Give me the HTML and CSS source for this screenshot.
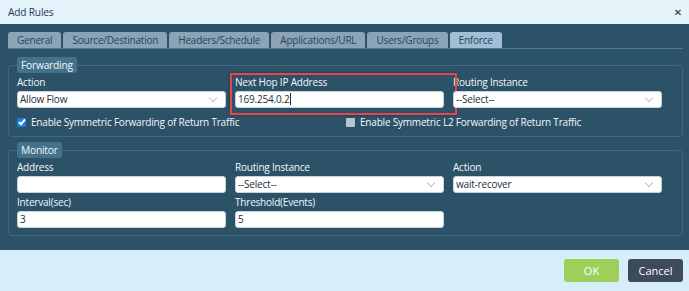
FILE: index.html
```html
<!DOCTYPE html>
<html lang="en">
<head>
    <meta charset="UTF-8">
    <title>Add Rules</title>
    <link rel="stylesheet" href="styles.css">
</head>
<body>
    <div class="dialog">
        <div class="titlebar">
            <span class="title">Add Rules</span>
            <span class="close">✕</span>
        </div>

        <div class="content">
            <!-- tabs -->
            <div class="tabs">
                <div class="tab">General</div>
                <div class="tab">Source/Destination</div>
                <div class="tab">Headers/Schedule</div>
                <div class="tab">Applications/URL</div>
                <div class="tab">Users/Groups</div>
                <div class="tab active">Enforce</div>
            </div>

            <!-- forwarding -->
            <fieldset class="group">
                <legend>Forwarding</legend>
                <div class="fields">
                    <div class="field">
                        <label>Action</label>
                        <div class="select">Allow Flow</div>
                    </div>
                    <div class="field highlight">
                        <label>Next Hop IP Address</label>
                        <div class="input">169.254.0.2<span class="caret"></span></div>
                    </div>
                    <div class="field">
                        <label>Routing Instance</label>
                        <div class="select">--Select--</div>
                    </div>
                </div>
                <div class="checks">
                    <div class="check"><span class="box checked"></span>Enable Symmetric Forwarding of Return Traffic</div>
                    <div class="check"><span class="box"></span>Enable Symmetric L2 Forwarding of Return Traffic</div>
                </div>
            </fieldset>

            <!-- monitor -->
            <fieldset class="group">
                <legend>Monitor</legend>
                <div class="fields">
                    <div class="field">
                        <label>Address</label>
                        <div class="input"></div>
                    </div>
                    <div class="field">
                        <label>Routing Instance</label>
                        <div class="select">--Select--</div>
                    </div>
                    <div class="field">
                        <label>Action</label>
                        <div class="select">wait-recover</div>
                    </div>
                    <div class="field">
                        <label>Interval(sec)</label>
                        <div class="input">3</div>
                    </div>
                    <div class="field">
                        <label>Threshold(Events)</label>
                        <div class="input">5</div>
                    </div>
                </div>
            </fieldset>
        </div>

        <div class="footer">
            <button class="btn btn-ok">OK</button>
            <button class="btn btn-cancel">Cancel</button>
        </div>
    </div>
</body>
</html>
```

FILE: styles.css
```css
body {
    margin: 0;
    font-family: 'Open Sans', 'DejaVu Sans', sans-serif;
    font-size: 10px;
    letter-spacing: -0.2px;
    background: #d7edf8;
}

.dialog {
    width: 689px;
    height: 291px;
    display: flex;
    flex-direction: column;
}

.titlebar {
    height: 24px;
    display: flex;
    align-items: center;
    justify-content: space-between;
    padding: 0 7px 0 8px;
    background: #e5f3fb;
    color: #1f3c52;
    font-size: 10.2px;
}

.close {
    font-size: 10px;
    font-weight: bold;
    color: #1a2633;
}

.content {
    height: 226px;
    box-sizing: border-box;
    background: #2c5268;
    padding: 8px 6px 0 8px;
}

.tabs {
    display: flex;
    gap: 2px;
    height: 16px;
    border-bottom: 1px solid #4c7b92;
    margin-bottom: 8px;
}

.tab {
    padding: 0 9px;
    background: #8aa3b6;
    color: #2a4458;
    border-radius: 3px 3px 0 0;
    line-height: 16px;
}

.tab.active {
    background: #a0bfd4;
}

.group {
    margin: 0 0 5px 0;
    padding: 0 8px 7px 8px;
    border: 1px solid #41687e;
    border-radius: 4px;
}

.group legend {
    padding: 0 4px;
    height: 16px;
    line-height: 16px;
    background: #44728b;
    color: #f2f6f8;
    border-radius: 3px;
    font-size: 10.2px;
}

.fields {
    display: grid;
    grid-template-columns: repeat(3, 209px);
    column-gap: 9px;
    row-gap: 2px;
    padding-top: 2px;
}

.field label {
    display: block;
    color: #f4f7f9;
    line-height: 15px;
    margin-bottom: 1px;
}

.input,
.select {
    height: 15px;
    line-height: 15px;
    background: #fff;
    border: 1px solid #c8d3da;
    border-radius: 3px;
    padding: 0 2px;
    color: #1c2f40;
    position: relative;
}

.select::after {
    content: "";
    position: absolute;
    right: 9px;
    top: 3px;
    width: 5px;
    height: 5px;
    border-right: 1px solid #bcc4ca;
    border-bottom: 1px solid #bcc4ca;
    transform: rotate(45deg);
}

.caret {
    display: inline-block;
    width: 1px;
    height: 12px;
    background: #1c2f40;
    vertical-align: -2px;
    margin-left: 1px;
}

.highlight {
    position: relative;
}

.highlight::after {
    content: "";
    position: absolute;
    left: -5px;
    right: -13px;
    top: -2px;
    bottom: -7px;
    border: 2px solid #e8454a;
    box-shadow: 0 0 3px rgba(0,0,0,0.35);
}

.checks {
    display: grid;
    grid-template-columns: 320px 1fr;
    column-gap: 9px;
    margin-top: 7px;
}

.check {
    display: flex;
    align-items: center;
    gap: 5px;
    color: #f4f7f9;
    line-height: 14px;
}

.box {
    width: 9px;
    height: 9px;
    background: #b9c6d0;
    border-radius: 1px;
}

.box.checked {
    background: #1a7be0;
    position: relative;
}

.box.checked::after {
    content: "";
    position: absolute;
    left: 3px;
    top: 0;
    width: 2px;
    height: 5px;
    border-right: 2px solid #fff;
    border-bottom: 2px solid #fff;
    transform: rotate(40deg);
}

.footer {
    flex: 1;
    display: flex;
    justify-content: flex-end;
    align-items: flex-start;
    gap: 9px;
    padding: 9px 6px 0 0;
}

.btn {
    width: 55px;
    height: 23px;
    border: none;
    border-radius: 3px;
    font-family: inherit;
    font-size: 11px;
    color: #fff;
}

.btn-ok { background: #9dd05b; }
.btn-cancel { background: #3d4a5a; }
```
